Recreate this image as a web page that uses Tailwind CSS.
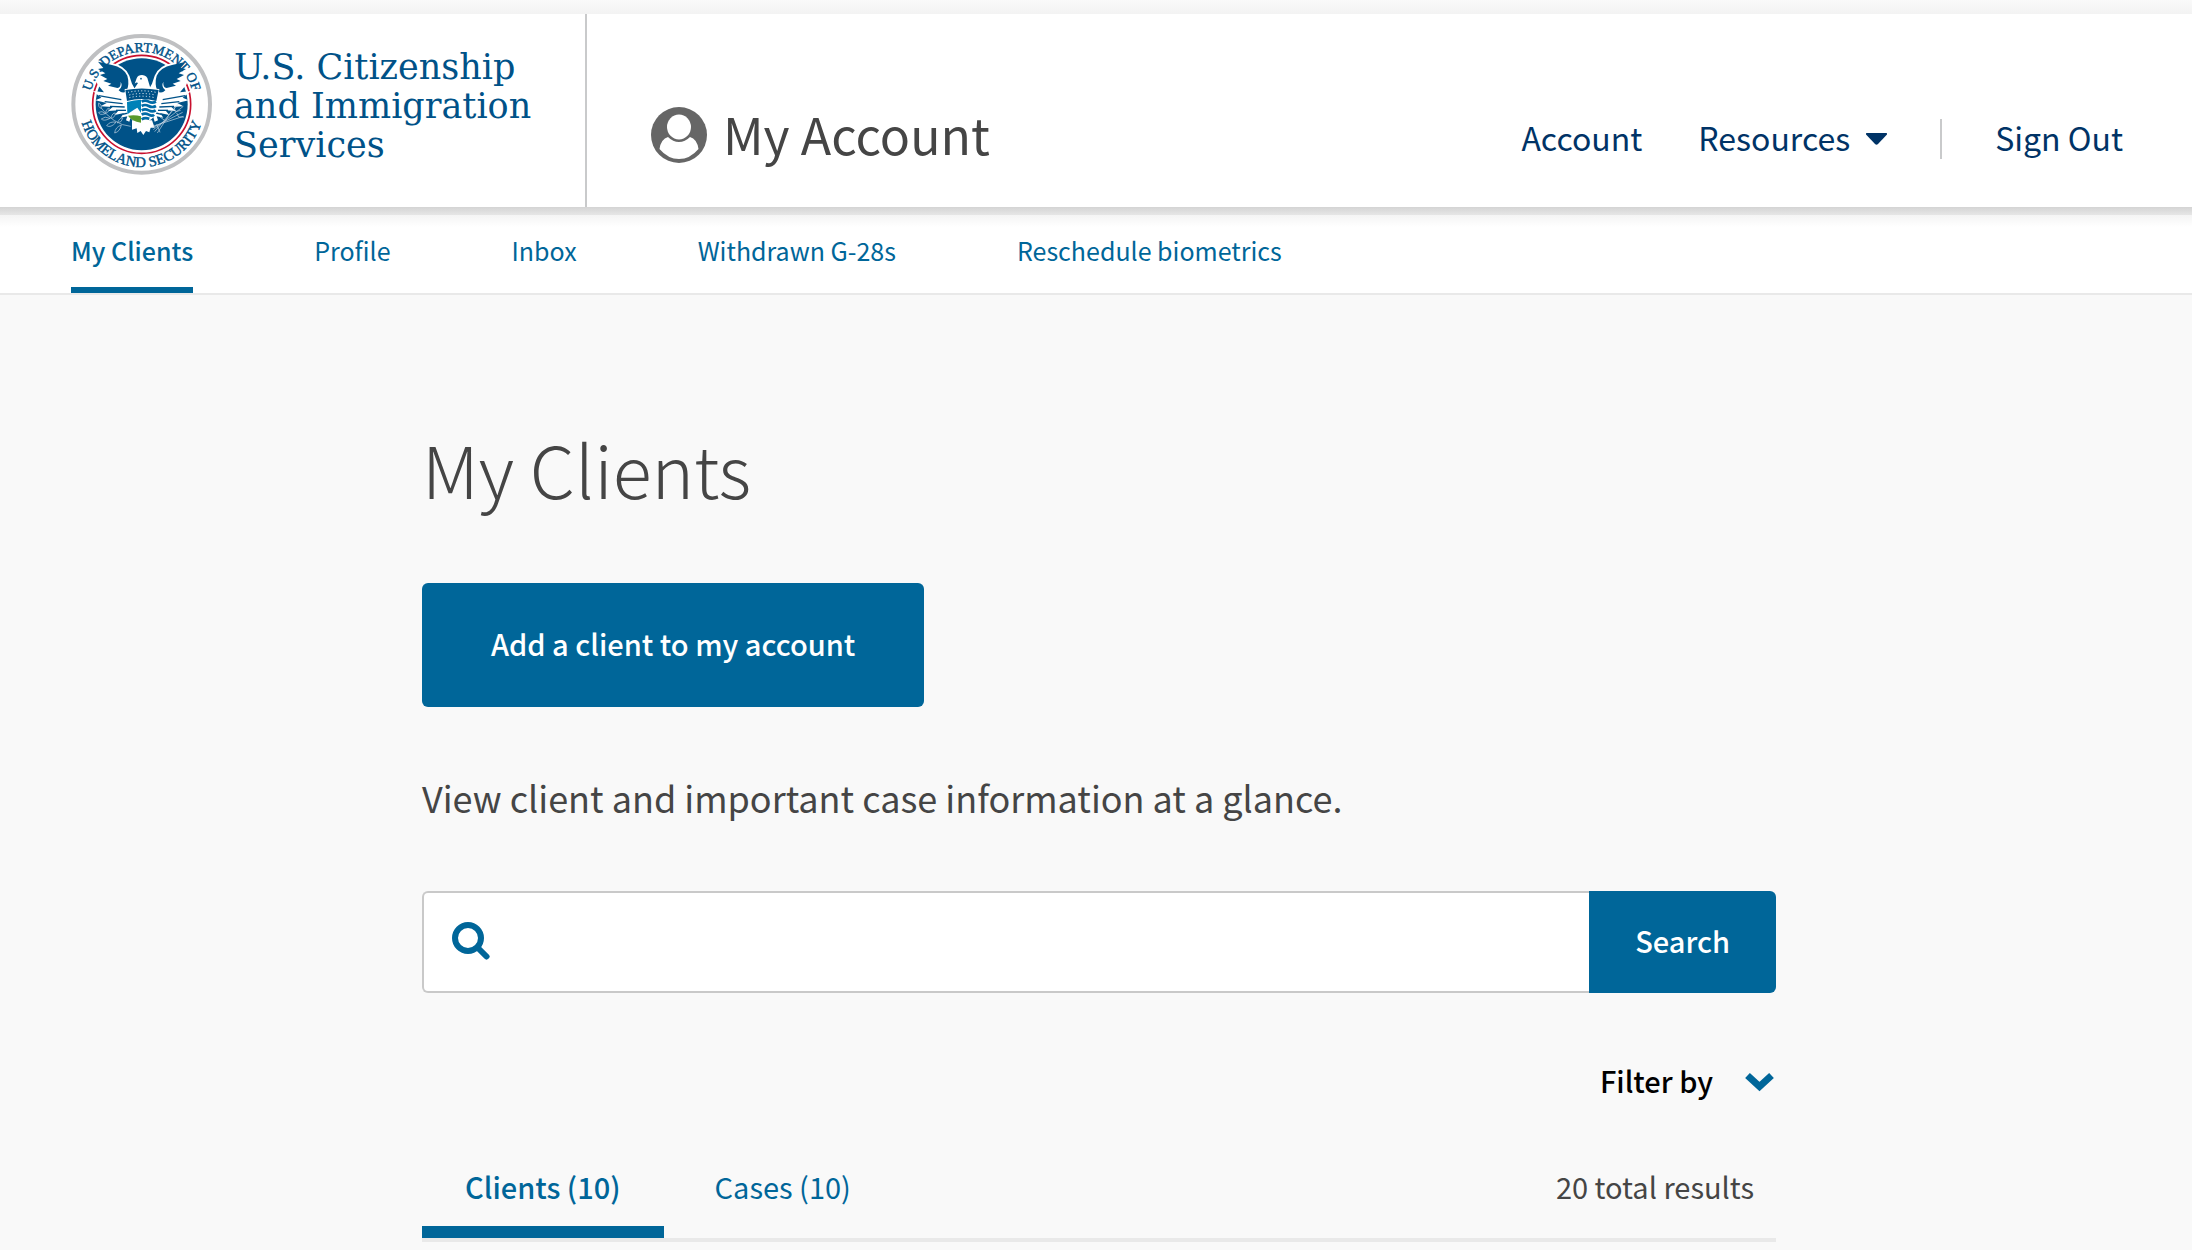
<!DOCTYPE html>
<html lang="en">

<head>
  <meta charset="UTF-8" />
  <meta name="viewport" content="width=device-width, initial-scale=1" />
  <title>My Clients | myUSCIS</title>
  <script src="https://cdn.jsdelivr.net/npm/@tailwindcss/browser@4"></script>
  <style>
    body {
      font-family: 'Noto Sans CJK SC', 'Noto Sans', sans-serif;
    }
  </style>
</head>

<body class="bg-[#f9f9f9] text-[#454545] antialiased">

  <div class="h-3.5 bg-linear-to-b from-[#fafafa] to-[#f3f3f3]"></div>

  <!-- Header -->
  <header class="flex bg-white">
    <a href="#" aria-label="USCIS home" class="flex w-[587px] shrink-0 gap-[22px] border-r-2 border-[#c9cacb] pt-5 pb-8 pl-[71px]">
      <svg class="size-[141px] shrink-0" viewBox="33 41 423 423" aria-hidden="true">
        <defs>
          <path id="arc-top" d="M88 252 A157 157 0 0 1 402 252" />
          <path id="arc-bottom" d="M57 252 A188 188 0 0 0 433 252" />
        </defs>
        <circle cx="245" cy="252" r="205" fill="#fff" stroke="#bfc0c2" stroke-width="12" />
        <circle cx="245" cy="252" r="147" fill="none" stroke="#c8102e" stroke-width="5" />
        <circle cx="245" cy="252" r="138" fill="#005288" />
        <!-- wings -->
        <g id="wing">
          <path fill="#fff" d="M110 120 L156 128 Q196 136 208 166 L216 190 L226 208 L222 258 L208 304 L198 300 L202 288 L182 292 L192 278 L164 284 L176 270 L144 272 L158 260 L122 258 L140 248 L106 240 L124 232 L98 212 L132 216 L112 192 L104 160 Z" />
          <path fill="#005288" d="M114 124 L156 134 Q190 141 202 166 Q209 190 200 212 Q188 222 176 210 Q190 198 182 184 Q184 202 172 203 L144 196 L154 190 L130 182 L142 176 L120 164 L136 159 L114 146 L130 143 Z" />
          <g fill="none" stroke="#005288" stroke-width="4">
            <path d="M116 226 L184 238" />
            <path d="M134 244 L188 250" />
            <path d="M150 258 L194 260" />
            <path d="M168 270 L198 270" />
            <path d="M188 282 L204 278" />
          </g>
        </g>
        <use href="#wing" transform="translate(492 0) scale(-1 1)" />
        <!-- head and tail -->
        <path fill="#fff" d="M224 190 L230 174 Q234 164 246 164 Q262 165 264 180 L272 206 L222 206 L234 188 Q230 184 224 190 Z" />
        <circle cx="243" cy="175" r="2.5" fill="#005288" />
        <path fill="#fff" d="M216 300 L276 300 L284 322 L272 322 L268 336 L258 332 L250 344 L242 332 L232 338 L230 324 L216 328 Z" />
        <!-- shield -->
        <path fill="#fff" d="M194 206 L244 202 L298 206 L292 272 Q280 302 244 312 Q206 300 198 272 Z" />
        <path fill="#005288" d="M196 209 Q245 200 296 209 L289 242 Q245 230 201 242 Z" />
        <g fill="none" stroke="#fff" stroke-width="3" stroke-dasharray="3 7">
          <path d="M204 216 Q245 207 288 216" />
          <path d="M208 224 Q245 215 286 224" />
          <path d="M208 232 Q245 223 284 232" />
        </g>
        <path fill="#0082b8" d="M201 245 Q222 239 243 238 L243 278 L232 262 L222 268 L202 282 Z" />
        <path fill="#5a9a2c" d="M204 286 Q224 282 243 288 L243 307 Q214 302 204 286 Z" />
        <g fill="none" stroke="#006ba6" stroke-width="8">
          <path d="M245 244 Q255 238 266 244 T288 244" />
          <path d="M245 257 Q255 251 266 257 T288 257" />
          <path d="M245 270 Q255 264 266 270 T287 270" />
          <path d="M245 283 Q255 277 266 283 T282 283" />
          <path d="M245 297 Q254 291 268 295" />
        </g>
        <!-- olive branch -->
        <g fill="none" stroke="#c5d5e3" stroke-width="2">
          <path d="M212 318 Q160 314 118 256" />
          <g fill="#005288">
            <path d="M124 264 Q114 262 116 248 Q126 252 124 264 Z" />
            <path d="M136 280 Q118 286 116 276 Q126 270 136 280 Z" />
            <path d="M136 280 Q140 262 148 264 Q148 276 136 280 Z" />
            <path d="M150 294 Q132 304 124 296 Q134 286 150 294 Z" />
            <path d="M152 294 Q158 276 166 278 Q166 292 152 294 Z" />
            <path d="M168 306 Q152 324 140 316 Q150 302 168 306 Z" />
            <path d="M172 308 Q180 290 188 294 Q186 306 172 308 Z" />
            <path d="M184 314 Q180 334 164 338 Q166 320 184 314 Z" />
          </g>
        </g>
        <!-- arrows -->
        <g fill="none" stroke="#c5d5e3" stroke-width="2">
          <path d="M278 318 L370 288" />
          <path d="M278 322 L368 276" />
          <path d="M280 328 L370 258" />
          <path d="M284 334 L354 252" />
          <path d="M292 338 L336 270" />
          <path d="M342 260 L346 274 L362 270 M350 278 L356 290 L372 290" />
          <path d="M290 312 L300 336 M314 300 L300 290" />
        </g>
        <g fill="#005288" stroke="#005288" stroke-width="1.2" font-family="'Liberation Serif', serif" text-anchor="middle">
          <text font-size="41"><textPath href="#arc-top" startOffset="50%">U.S. DEPARTMENT OF</textPath></text>
          <text font-size="44"><textPath href="#arc-bottom" startOffset="50%">HOMELAND SECURITY</textPath></text>
        </g>
      </svg>
      <span class="pt-3.5 font-['DejaVu_Serif',serif] text-[35px] leading-[39px] whitespace-nowrap text-[#005288]">U.S. Citizenship<br />and Immigration<br />Services</span>
    </a>

    <div class="flex items-center gap-4 pt-12 pl-16">
      <svg class="size-14" viewBox="0 0 56 56" aria-hidden="true">
        <circle cx="28" cy="28" r="28" fill="#666" />
        <ellipse cx="28" cy="20" rx="12" ry="12.5" fill="#fff" />
        <path fill="#fff" d="M8.500 42 Q10 32 17 30 Q22 35 28 35 Q34 35 39 30 Q46 32 47.500 42 Q39 52 28 52 Q17 52 8.500 42 Z" />
      </svg>
      <span class="pb-1 text-[50px] leading-[60px]">My Account</span>
    </div>

    <nav aria-label="Account" class="ml-auto flex items-center pt-14 pr-[69px] text-[32px] leading-10 text-[#003366]">
      <a href="#" class="pb-1">Account</a>
      <button type="button" class="ml-14 flex items-center gap-4">
        <span class="pb-1">Resources</span>
        <svg class="h-3 w-[21px]" viewBox="0 0 21 12" aria-hidden="true">
          <path fill="currentColor" d="M1 0 H20 Q22 0 20.500 2 L12 11 Q10.500 12.500 9 11 L0.500 2 Q-1 0 1 0 Z" />
        </svg>
      </button>
      <span class="mx-[53px] h-10 w-0.5 bg-[#c9cacb]"></span>
      <a href="#" class="pb-1">Sign Out</a>
    </nav>
  </header>

  <!-- Section navigation, with the header shadow on top -->
  <div class="border-b-2 border-[#e9e9e9] bg-white">
    <div class="h-2 bg-linear-to-b from-[#d4d4d4] to-[#e6e6e6]"></div>
    <div class="h-3 bg-linear-to-b from-[#f4f4f4] to-white"></div>
    <nav aria-label="Sections" class="flex gap-[121px] pt-2 pl-[71px] text-[25px] leading-[30px] text-[#006699]">
      <a href="#" aria-current="page" class="border-b-6 border-[#006699] pb-[22px] font-medium">My Clients</a>
      <a href="#">Profile</a>
      <a href="#">Inbox</a>
      <a href="#">Withdrawn G-28s</a>
      <a href="#">Reschedule biometrics</a>
    </nav>
  </div>

  <main class="pt-[125px] pl-1.5">
    <div class="mx-auto max-w-[1354px]">
      <h1 class="text-[72px] leading-24 font-light">My Clients</h1>

      <button type="button" class="mt-[67px] block rounded-md bg-[#006699] px-[69px] pt-10 pb-11 text-[29px] leading-10 font-medium text-white">Add a client to my account</button>

      <p class="mt-[66px] text-[36px] leading-12">View client and important case information at a glance.</p>

      <form class="mt-[70px] flex">
        <label class="flex flex-1 items-center gap-6 rounded-l-md border-2 border-r-0 border-[#c9c9c9] bg-white pb-0.5 pl-7">
          <svg class="size-[38px] shrink-0" viewBox="0 0 38 38" fill="none" stroke="#006699" stroke-width="6" stroke-linecap="round" aria-hidden="true">
            <circle cx="16" cy="16" r="13" />
            <path d="M26 26 L34.500 34.500" />
          </svg>
          <input type="text" aria-label="Search clients" class="h-full flex-1 text-[29px] outline-none" />
        </label>
        <button type="submit" class="rounded-r-md bg-[#006699] px-[46px] pt-[29px] pb-[33px] text-[29px] leading-10 font-medium text-white">Search</button>
      </form>

      <div class="mt-[67px] flex justify-end">
        <button type="button" class="flex items-center gap-8 text-[29px] leading-10 font-medium text-black">
          Filter by
          <svg class="mt-1 mr-0.5 h-5 w-[29px]" viewBox="0 0 29 20" fill="none" stroke="#006699" stroke-width="7" aria-hidden="true">
            <path d="M2.500 3.500 L14.500 14.500 L26.500 3.500" />
          </svg>
        </button>
      </div>

      <div class="mt-[66px] flex items-start justify-between border-b-4 border-[#e9e9e9] text-[29px] leading-10">
        <div class="flex gap-2 text-[#006699]">
          <button type="button" class="border-b-12 border-[#006699] px-[43px] pb-5 font-medium">Clients (10)</button>
          <button type="button" class="border-b-12 border-transparent px-[43px] pb-5">Cases (10)</button>
        </div>
        <span class="pr-[22px]">20 total results</span>
      </div>
    </div>
  </main>

</body>
</html>
